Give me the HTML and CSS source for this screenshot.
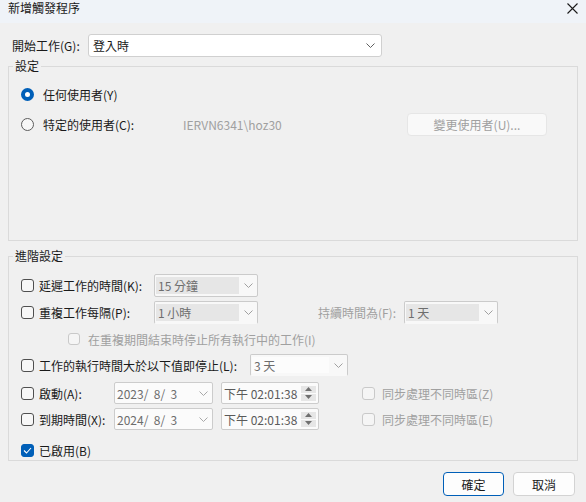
FILE: index.html
```html
<!DOCTYPE html>
<html lang="zh-Hant">
<head>
<meta charset="utf-8">
<title>新增觸發程序</title>
<link rel="stylesheet" href="styles.css">
</head>
<body>
<div class="titlebar">
  <span class="title">新增觸發程序</span>
  <svg class="close" width="11" height="11" viewBox="0 0 11 11"><path d="M0.5 0.5L10.5 10.5M10.5 0.5L0.5 10.5" stroke="#1a1a1a" stroke-width="1.1" fill="none"/></svg>
</div>

<div class="begin-row">
  <span class="begin-label">開始工作(G):</span>
  <div class="combo combo-main">
    <span class="val">登入時</span>
    <svg class="chev" width="9" height="5" viewBox="0 0 9 5"><polyline points="0.5,0.5 4.5,4.5 8.5,0.5" fill="none" stroke="#5f5f5f" stroke-width="1"/></svg>
  </div>
</div>

<fieldset class="group group-settings">
  <legend>設定</legend>
  <div class="settings-body">
    <div class="radio-row">
      <span class="radio checked"></span><span>任何使用者(Y)</span>
    </div>
    <div class="radio-row user-row">
      <span class="radio"></span><span class="user-label">特定的使用者(C):</span><span class="user-name">IERVN6341\hoz30</span><span class="btn btn-disabled">變更使用者(U)...</span>
    </div>
  </div>
</fieldset>

<fieldset class="group group-advanced">
  <legend>進階設定</legend>
  <div class="advanced-body">
    <div class="row row-a">
      <span class="check"></span><span class="lbl lbl-a">延遲工作的時間(K):</span>
      <div class="combo combo-dis w104"><span class="inner">15 分鐘</span><span class="chev-area"><svg width="9" height="5" viewBox="0 0 9 5"><polyline points="0.5,0.5 4.5,4.5 8.5,0.5" fill="none" stroke="#a0a0a0" stroke-width="1"/></svg></span></div>
    </div>
    <div class="row row-b">
      <span class="check"></span><span class="lbl lbl-a">重複工作每隔(P):</span>
      <div class="combo combo-dis w104 nobottom"><span class="inner">1 小時</span><span class="chev-area"><svg width="9" height="5" viewBox="0 0 9 5"><polyline points="0.5,0.5 4.5,4.5 8.5,0.5" fill="none" stroke="#a0a0a0" stroke-width="1"/></svg></span></div>
      <span class="dur-label">持續時間為(F):</span>
      <div class="combo combo-dis w94 nobottom"><span class="inner">1 天</span><span class="chev-area"><svg width="9" height="5" viewBox="0 0 9 5"><polyline points="0.5,0.5 4.5,4.5 8.5,0.5" fill="none" stroke="#a0a0a0" stroke-width="1"/></svg></span></div>
    </div>
    <div class="row row-c">
      <span class="check check-dis small"></span><span class="dis-text">在重複期間結束時停止所有執行中的工作(I)</span>
    </div>
    <div class="row row-d">
      <span class="check"></span><span class="lbl lbl-d">工作的執行時間大於以下值即停止(L):</span>
      <div class="combo combo-dis combo-light w98 nobottom"><span class="inner">3 天</span><span class="chev-area"><svg width="9" height="5" viewBox="0 0 9 5"><polyline points="0.5,0.5 4.5,4.5 8.5,0.5" fill="none" stroke="#a0a0a0" stroke-width="1"/></svg></span></div>
    </div>
    <div class="row row-e">
      <span class="check"></span><span class="lbl lbl-e">啟動(A):</span>
      <div class="combo combo-date"><span class="date-val">2023/  8/  3</span><svg width="9" height="5" viewBox="0 0 9 5"><polyline points="0.5,0.5 4.5,4.5 8.5,0.5" fill="none" stroke="#a8a8a8" stroke-width="1"/></svg></div>
      <div class="combo combo-time"><span class="time-val">下午 02:01:38</span>
        <span class="spin"><span class="spin-btn"><svg width="7" height="4" viewBox="0 0 7 4"><polygon points="0,4 3.5,0 7,4" fill="#707070"/></svg></span><span class="spin-btn"><svg width="7" height="4" viewBox="0 0 7 4"><polygon points="0,0 3.5,4 7,0" fill="#707070"/></svg></span></span>
      </div>
      <span class="check check-dis tz"></span><span class="dis-text">同步處理不同時區(Z)</span>
    </div>
    <div class="row row-f">
      <span class="check"></span><span class="lbl lbl-e">到期時間(X):</span>
      <div class="combo combo-date"><span class="date-val">2024/  8/  3</span><svg width="9" height="5" viewBox="0 0 9 5"><polyline points="0.5,0.5 4.5,4.5 8.5,0.5" fill="none" stroke="#a8a8a8" stroke-width="1"/></svg></div>
      <div class="combo combo-time"><span class="time-val">下午 02:01:38</span>
        <span class="spin"><span class="spin-btn"><svg width="7" height="4" viewBox="0 0 7 4"><polygon points="0,4 3.5,0 7,4" fill="#707070"/></svg></span><span class="spin-btn"><svg width="7" height="4" viewBox="0 0 7 4"><polygon points="0,0 3.5,4 7,0" fill="#707070"/></svg></span></span>
      </div>
      <span class="check check-dis tz"></span><span class="dis-text">同步處理不同時區(E)</span>
    </div>
    <div class="row row-g">
      <span class="check checked"><svg width="9" height="7" viewBox="0 0 9 7"><polyline points="1,3.5 3.5,6 8,1" fill="none" stroke="#ffffff" stroke-width="1.1"/></svg></span><span>已啟用(B)</span>
    </div>
  </div>
</fieldset>

<div class="buttons">
  <span class="btn btn-default">確定</span>
  <span class="btn btn-cancel">取消</span>
</div>
</body>
</html>
```

FILE: styles.css
```css
* { box-sizing: border-box; }
html, body { margin: 0; padding: 0; }
body {
  width: 586px;
  height: 502px;
  overflow: hidden;
  background: #f0f0f0;
  font-family: "Noto Sans CJK TC", "Microsoft JhengHei UI", sans-serif;
  font-size: 12px;
  color: #1a1a1a;
}

.titlebar {
  height: 23px;
  background: #eff3f8;
  display: flex;
  justify-content: space-between;
  align-items: flex-start;
  padding: 0 8px 0 8px;
}
.title { line-height: 16px; }
.close { margin-top: 3px; }

.begin-row {
  display: flex;
  align-items: center;
  height: 23px;
  margin-top: 11px;
  padding-left: 12px;
}
.begin-label { width: 76px; }

.combo {
  display: flex;
  align-items: center;
  border: 1px solid #d0d0d0;
  border-radius: 3px;
}
.combo-main {
  width: 294px;
  height: 23px;
  background: #ffffff;
  justify-content: space-between;
  padding: 0 6px 0 4px;
}

.group {
  margin: 0 8px;
  padding: 0;
  border: 1px solid #dadada;
  min-width: 0;
}
.group legend {
  margin-left: 4px;
  padding: 0 2px;
  line-height: 16px;
}
.group-settings { margin-top: 1px; }
.group-advanced { margin-top: 7px; }

.settings-body {
  height: 166px;
  padding: 10px 0 0 12px;
}
.radio-row {
  display: flex;
  align-items: center;
  height: 20px;
}
.user-row {
  height: 23px;
  margin-top: 9px;
}
.radio {
  width: 13px;
  height: 13px;
  border-radius: 50%;
  border: 1px solid #5c5c5c;
  background: #f7f7f7;
  margin-right: 9px;
  flex: none;
}
.radio.checked {
  border: 4px solid #005fb8;
  background: #ffffff;
}
.user-label { width: 140px; }
.user-name { flex: 1; color: #a0a0a0; }

.btn {
  display: flex;
  align-items: center;
  justify-content: center;
  border-radius: 4px;
  background: #fdfdfd;
  border: 1px solid #d3d3d3;
}
.btn-disabled {
  width: 140px;
  height: 23px;
  margin-right: 30px;
  background: #f9f9f9;
  border-color: #e6e6e6;
  color: #a0a0a0;
}

.advanced-body {
  height: 196px;
  padding: 10px 0 0 12px;
}
.row {
  display: flex;
  align-items: center;
}
.row-a { height: 23px; }
.row-b { height: 23px; margin-top: 4px; }
.row-c { height: 20px; margin-top: 5px; padding-left: 47px; }
.row-d { height: 22px; margin-top: 5px; }
.row-e { height: 22px; margin-top: 6px; }
.row-f { height: 22px; margin-top: 4px; }
.row-g { height: 18px; margin-top: 11px; }

.check {
  width: 13px;
  height: 13px;
  border: 1px solid #4f4f4f;
  border-radius: 3px;
  background: #f7f7f7;
  margin-right: 5px;
  flex: none;
  display: flex;
  align-items: center;
  justify-content: center;
}
.check.checked {
  background: #005fb8;
  border-color: #005fb8;
}
.check-dis {
  border-color: #c9c9c9;
  background: #f5f5f5;
  margin-right: 7px;
}
.check.small { width: 12px; height: 12px; margin-right: 8px; }
.check.tz { margin-left: 43px; }
.dis-text { color: #a0a0a0; }

.lbl-a { width: 115px; }
.lbl-d { width: 211px; }
.lbl-e { width: 75px; }

.combo-dis {
  height: 23px;
  background: #f8f8f8;
  border-color: #cbcbcb;
  border-radius: 2px;
  padding: 2px 0 2px 1px;
  color: #6d6d6d;
}
.row-d .combo-dis { height: 22px; }
.combo-dis.nobottom { border-bottom-color: transparent; }
.w104 { width: 104px; }
.w94 { width: 94px; }
.w98 { width: 98px; }
.combo-dis .inner {
  flex: 1;
  height: 100%;
  background: #e6e6e6;
  display: flex;
  align-items: center;
  padding-left: 2px;
}
.combo-light .inner { background: #fcfcfc; }
.chev-area {
  width: 18px;
  flex: none;
  display: flex;
  justify-content: center;
  align-items: center;
}
.dur-label {
  width: 146px;
  text-align: right;
  padding-right: 8px;
  color: #a0a0a0;
}

.combo-date {
  width: 99px;
  height: 22px;
  background: #fbfbfb;
  border-color: #cccccc;
  border-radius: 2px;
  justify-content: space-between;
  padding: 0 4px 0 2px;
  color: #6d6d6d;
}
.date-val { white-space: pre; }
.combo-time {
  width: 98px;
  height: 22px;
  margin-left: 8px;
  background: #fbfbfb;
  border-color: #cccccc;
  border-radius: 2px;
  justify-content: space-between;
  padding: 0 2px 0 2px;
  color: #5a5a5a;
}
.spin {
  display: flex;
  flex-direction: column;
  gap: 1px;
}
.spin-btn {
  width: 15px;
  height: 7px;
  background: #e6e6e6;
  display: flex;
  align-items: center;
  justify-content: center;
}

.buttons {
  display: flex;
  justify-content: flex-end;
  gap: 9px;
  margin-top: 11px;
  padding-right: 11px;
}
.btn-default {
  width: 61px;
  height: 24px;
  border-color: #005fb8;
}
.btn-cancel {
  width: 62px;
  height: 24px;
}
```
